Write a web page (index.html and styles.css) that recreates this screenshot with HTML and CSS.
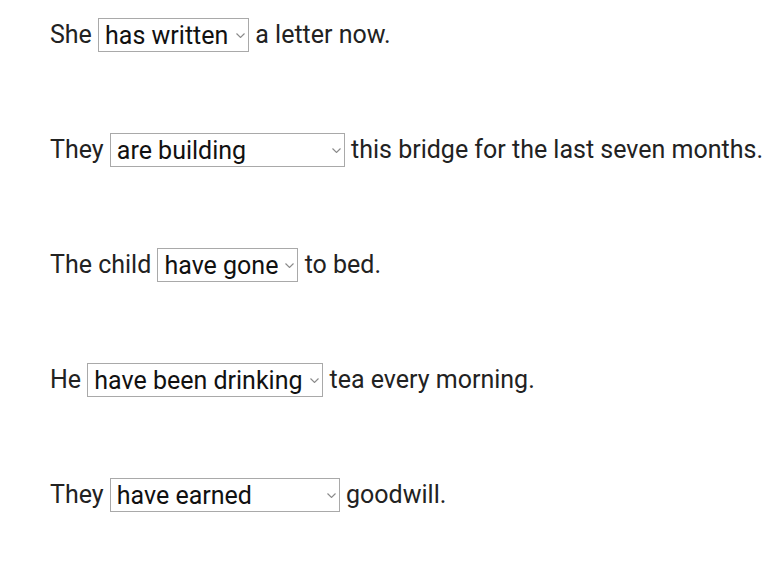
FILE: index.html
```html
<!DOCTYPE html>
<html lang="en">
<head>
    <meta charset="UTF-8">
    <meta name="viewport" content="width=device-width, initial-scale=1.0">
    <title>Tenses - Choose the correct form</title>
    <link rel="stylesheet" href="styles.css">
</head>
<body>

<div class="quiz">
    <p class="sentence">She
        <span class="picker"><select class="answer">
                <option selected>has written</option>
                <option>wrote</option>
                <option>writes</option>
            </select><svg class="chevron" width="9" height="5" viewBox="0 0 9 5"><path d="M0.5 0.5 L4.5 4.5 L8.5 0.5" /></svg></span>
        a letter now.</p>

    <p class="sentence">They
        <span class="picker"><select class="answer">
                <option selected>are building</option>
                <option>have been building</option>
                <option>built</option>
            </select><svg class="chevron" width="9" height="5" viewBox="0 0 9 5"><path d="M0.5 0.5 L4.5 4.5 L8.5 0.5" /></svg></span>
        this bridge for the last seven months.</p>

    <p class="sentence">The child
        <span class="picker"><select class="answer">
                <option selected>have gone</option>
                <option>has gone</option>
                <option>went</option>
            </select><svg class="chevron" width="9" height="5" viewBox="0 0 9 5"><path d="M0.5 0.5 L4.5 4.5 L8.5 0.5" /></svg></span>
        to bed.</p>

    <p class="sentence">He
        <span class="picker"><select class="answer">
                <option selected>have been drinking</option>
                <option>drinks</option>
                <option>has drunk</option>
            </select><svg class="chevron" width="9" height="5" viewBox="0 0 9 5"><path d="M0.5 0.5 L4.5 4.5 L8.5 0.5" /></svg></span>
        tea every morning.</p>

    <p class="sentence">They
        <span class="picker"><select class="answer">
                <option selected>have earned</option>
                <option>have been earning</option>
                <option>earned</option>
            </select><svg class="chevron" width="9" height="5" viewBox="0 0 9 5"><path d="M0.5 0.5 L4.5 4.5 L8.5 0.5" /></svg></span>
        goodwill.</p>
</div>

</body>
</html>
```

FILE: styles.css
```css
body {
    margin: 0;
    padding: 0;
    background: #fff;
    font-family: Roboto, "Liberation Sans", Arial, sans-serif;
    color: #222;
}

.quiz {
    padding: 18px 0 0 50px;
    display: flex;
    flex-direction: column;
    gap: 80.5px;
}

.sentence {
    margin: 0;
    font-size: 25px;
    line-height: 34px;
    white-space: nowrap;
}

.picker {
    position: relative;
    display: inline-block;
    vertical-align: top;
}

.answer {
    -webkit-appearance: none;
    appearance: none;
    font-family: inherit;
    font-size: 25px;
    color: #111;
    background-color: #fff;
    border: 1px solid #a9a9a9;
    border-radius: 0;
    padding: 0 19px 0 6px;
    height: 34px;
    margin: 0;
}

.chevron {
    position: absolute;
    right: 4px;
    top: 15px;
    fill: none;
    stroke: #8a8a8a;
    stroke-width: 1.1;
    pointer-events: none;
}
```
